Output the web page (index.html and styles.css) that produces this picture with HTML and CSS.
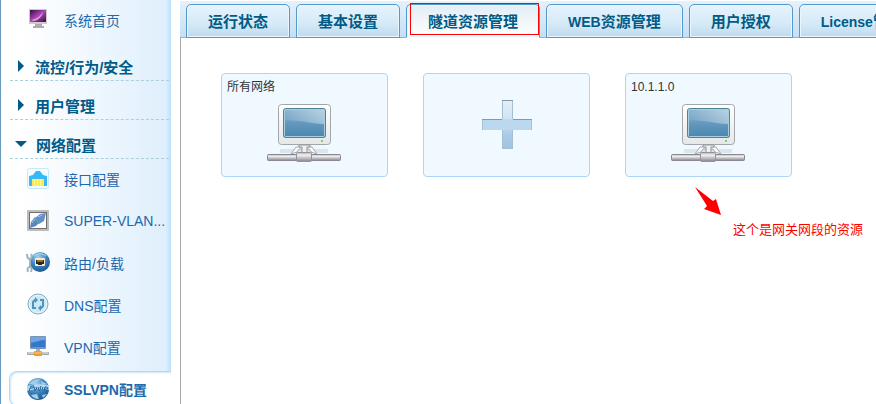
FILE: index.html
```html
<!DOCTYPE html>
<html lang="zh-CN">
<head>
  <meta charset="UTF-8" />
  <title>SSLVPN配置</title>
  <meta name="viewport" content="width=device-width, initial-scale=1" />
  <link rel="stylesheet" href="styles.css">
</head>
<body>
  <svg width="0" height="0" class="defs" aria-hidden="true">
    <defs>
      <linearGradient id="screen" x1="0" y1="0" x2="0" y2="1">
        <stop offset="0" stop-color="#a3c4d9" />
        <stop offset="0.5" stop-color="#6598bd" />
        <stop offset="1" stop-color="#4a86b0" />
      </linearGradient>
      <linearGradient id="shine" x1="0" y1="0" x2="1" y2="0">
        <stop offset="0" stop-color="#7eaac8" />
        <stop offset="1" stop-color="#c9deeb" />
      </linearGradient>
      <linearGradient id="pipe" x1="0" y1="0" x2="0" y2="1">
        <stop offset="0" stop-color="#b5b5b9" />
        <stop offset="0.3" stop-color="#f1f1f4" />
        <stop offset="1" stop-color="#85858b" />
      </linearGradient>
      <linearGradient id="frame" x1="0" y1="0" x2="0" y2="1">
        <stop offset="0" stop-color="#ffffff" />
        <stop offset="1" stop-color="#e6e7e9" />
      </linearGradient>
      <linearGradient id="purple" x1="0" y1="0" x2="1" y2="1">
        <stop offset="0" stop-color="#3b0a4c" />
        <stop offset="0.5" stop-color="#a949b0" />
        <stop offset="1" stop-color="#3b0a4c" />
      </linearGradient>
      <radialGradient id="globe" cx="0.4" cy="0.25" r="0.8">
        <stop offset="0" stop-color="#a5d3ee" />
        <stop offset="0.5" stop-color="#3f88c0" />
        <stop offset="1" stop-color="#17528f" />
      </radialGradient>
      <linearGradient id="plus-v" x1="0" y1="0" x2="0" y2="1">
        <stop offset="0" stop-color="#e4f0f9" />
        <stop offset="0.4" stop-color="#cfe2f4" />
        <stop offset="0.7" stop-color="#abcbe6" />
        <stop offset="1" stop-color="#a0c2e0" />
      </linearGradient>
      <symbol id="network-pc" viewBox="0 0 76 60">
        <path d="M14 46h48v4H14z" fill="#dbe6ec" />
        <path d="M25 51l5-7h16l5 7-6-2-2-3H33l-2 3z" fill="#f7f8f9" stroke="#a7acb1" />
        <rect x="12.500" y="1.500" width="52" height="40" rx="3" fill="url(#frame)" stroke="#a3a7ab" />
        <rect x="17.500" y="5.500" width="42" height="29" rx="2" fill="url(#screen)" stroke="#4e8397" />
        <path d="M19 7h39v14C46 21 36 17 19 17z" fill="url(#shine)" opacity="0.6" />
        <rect x="18.500" y="6.500" width="40" height="27" rx="1" fill="none" stroke="#a9cede" />
        <path d="M55 38h2" stroke="#83cf61" stroke-width="2" />
        <path d="M33 42h11v2h-3v7h-5v-7h-3z" fill="#eff0f1" stroke="#93979b" />
        <rect x="1.500" y="51.500" width="73" height="6" rx="1" fill="url(#pipe)" stroke="#88888e" />
        <rect x="30.500" y="49.500" width="15" height="9" rx="1" fill="url(#pipe)" stroke="#929298" />
      </symbol>
    </defs>
  </svg>

  <div class="layout">
    <nav class="sidebar">
      <a class="item" href="#">
        <svg class="icon" viewBox="0 0 24 24">
          <path d="M9 16h7v2H9zM7 18h11v2H7z" fill="#b2aaa8" />
          <rect x="3" y="1" width="18" height="15" fill="#cfcbc8" />
          <rect x="4" y="2" width="16" height="12" fill="url(#purple)" />
          <path d="M5 12c6-1 9-4 12-8-1 5-5 8-9 9z" fill="#e49be2" />
        </svg>
        系统首页
      </a>
      <a class="group" href="#"><span class="arrow"></span>流控/行为/安全</a>
      <a class="group" href="#"><span class="arrow"></span>用户管理</a>
      <a class="group open" href="#"><span class="arrow"></span>网络配置</a>
      <a class="item" href="#">
        <svg class="icon" viewBox="0 0 24 24">
          <rect x="1.500" y="1.500" width="21" height="20" rx="2" fill="#f3fcff" stroke="#c5e9f8" />
          <path d="M3 19V9l4-1 3-4h4l3 4 4 1v10z" fill="#38b9f6" />
          <rect x="6" y="12" width="12" height="7" fill="#ffe94b" />
          <path d="M8.500 12v7M11.500 12v7M14.500 12v7" stroke="#fff6a4" />
        </svg>
        接口配置
      </a>
      <a class="item" href="#">
        <svg class="icon" viewBox="0 0 24 24">
          <rect x="1" y="1" width="22" height="21" rx="1" fill="#bdbdbd" />
          <rect x="3.500" y="3.500" width="17" height="16" fill="#fff" stroke="#6e6e6e" />
          <path d="M4 19l1-6 4-5 5 5-4 4z" fill="#5886c4" />
          <path d="M20 4l-2 8-5 3-4-6 5-4z" fill="#638fd0" />
          <path d="M9 9l4 6" stroke="#5bbf67" />
          <path d="M6 14l3-4M12 8l4-2" stroke="#a4c6ec" />
        </svg>
        SUPER-VLAN...
      </a>
      <a class="item" href="#">
        <svg class="icon" viewBox="0 0 24 24">
          <circle cx="14" cy="11" r="10" fill="url(#globe)" />
          <path d="M8 5c4-3 8-3 12 0" fill="none" stroke="#b4daf3" />
          <rect x="9" y="7" width="10" height="8" rx="1" fill="#f4ead5" />
          <path d="M10 13V9h8v4h-2v1h-4v-1z" fill="#30241a" />
          <path d="M12 9v2M14 9v2M16 9v2" stroke="#f2b943" />
          <path d="M1 3c0 4 1 5 3 5 2-1 2-3 1-5M4 8v8M2 21c-1-4 0-5 2-5s2 2 1 5" fill="none" stroke="#9eb5c6" stroke-width="2" />
        </svg>
        路由/负载
      </a>
      <a class="item" href="#">
        <svg class="icon" viewBox="0 0 24 24">
          <circle cx="12" cy="11" r="10" fill="#e0f3fa" stroke="#7fabc1" />
          <circle cx="12" cy="11" r="8" fill="#c9e9f5" />
          <path d="M10 15H7V9l2-2h2M14 7h3v6l-2 2h-2" fill="none" stroke="#5390bb" stroke-width="2" />
          <path d="M9 4l3 3-3 3zM15 12l-3 3 3 3z" fill="#5390bb" />
        </svg>
        DNS配置
      </a>
      <a class="item" href="#">
        <svg class="icon" viewBox="0 0 24 24">
          <rect x="4" y="1" width="16" height="13" rx="1" fill="#7894b0" />
          <rect x="5" y="2" width="14" height="10" fill="#3478cb" />
          <path d="M5 2h14v3C14 5 10 7 5 8z" fill="#6da8e5" />
          <path d="M10 14h4v3h-4z" fill="#a5b1bb" />
          <rect x="1" y="17" width="22" height="3" rx="1" fill="#a2a7aa" />
          <path d="M2 18h20" stroke="#edf0f2" />
          <rect x="8" y="16" width="8" height="5" rx="1" fill="#ee9b2c" />
          <path d="M9 18h6" stroke="#ffd18a" />
        </svg>
        VPN配置
      </a>
      <a class="item active" href="#">
        <svg class="icon" viewBox="0 0 24 24">
          <circle cx="12" cy="12" r="11" fill="url(#globe)" />
          <path d="M3 7c4-5 9-4 11-5-1 3-5 2-6 5zM15 4l6 3-5 1zM5 18l6-1 2 5c-3 0-6-1-8-4zM16 18l5-1-4 4z" fill="#a5cde6" />
          <path d="M1 9c7-2 15-2 22-1v5c-7-1-15-1-22 1z" fill="#b5d7ec" />
          <path d="M3 14l2-5h3l-1 2H4M9 10l-1 3h2l1-3M13 10l-1 3M15 9l-1 4-1 1M17 10l-1 3M19 12h3l-1-2h-2l-1 3h2" fill="none" stroke="#24659e" />
        </svg>
        SSLVPN配置
      </a>
    </nav>

    <main class="main">
      <div class="tabs">
        <button class="tab">运行状态</button>
        <button class="tab">基本设置</button>
        <button class="tab active">隧道资源管理</button>
        <button class="tab"><span class="latin">WEB</span>资源管理</button>
        <button class="tab">用户授权</button>
        <button class="tab"><span class="latin">License</span>管理</button>
      </div>
      <div class="content">
        <button class="card">
          <span class="name">所有网络</span>
          <svg class="pc"><use href="#network-pc" /></svg>
        </button>
        <button class="card add" aria-label="add">
          <svg class="plus" viewBox="0 0 50 50">
            <rect x="20" y="0" width="11" height="49" fill="url(#plus-v)" />
            <path d="M20.500 1v48M30.500 1v48" stroke="#a5bfd3" />
            <rect x="0" y="19" width="50" height="11" fill="#bcd8ee" />
            <path d="M0 19.500h20M31 19.500h19M20 0.500h11" stroke="#8498a8" />
            <path d="M0.500 20v10M49.500 20v10" stroke="#a5bfd3" />
          </svg>
        </button>
        <div class="cell">
          <button class="card">
            <span class="name">10.1.1.0</span>
            <svg class="pc"><use href="#network-pc" /></svg>
          </button>
          <div class="note">
            <svg class="pointer" viewBox="0 0 27 29">
              <path d="M0 0l18 14 3-2 5 16-17-6 3-3z" fill="#f00" />
            </svg>
            <span class="note-text">这个是网关网段的资源</span>
          </div>
        </div>
      </div>
    </main>
  </div>
</body>
</html>
```

FILE: styles.css
```css
:root {
  --link: #1c69ae;
  --heading: #005b87;
  --tab-border: #5299cc;
  --card-border: #abd6f9;
}
* { box-sizing: border-box; }
body {
  margin: 0;
  font-family: "Liberation Sans", "Noto Sans CJK SC", sans-serif;
  font-size: 14px;
  background: #fff;
}
a { text-decoration: none; }
button {
  font-family: inherit;
  cursor: pointer;
}
.defs { position: absolute; }
.layout {
  display: flex;
  height: 100vh;
  overflow: hidden;
}

/* sidebar */
.sidebar {
  flex: none;
  width: 171px;
  margin-right: 9px;
  border-left: 1px solid #6699bd;
  background: linear-gradient(to right, transparent 97%, #bddffb), linear-gradient(to right, #fff 12%, #edf6fe 60%, #deeefb);
}
.item {
  display: flex;
  align-items: center;
  gap: 14px;
  height: 42px;
  padding: 0 0 2px 25px;
  color: var(--link);
  white-space: nowrap;
}
.icon {
  flex: none;
  width: 24px;
  height: 24px;
}
.item.active {
  height: 35px;
  margin: 2px 0 0 8px;
  padding: 0 0 0 16px;
  border: 1px solid #b0d8f4;
  border-right: none;
  border-radius: 8px 0 0 8px;
  box-shadow: inset 1px 1px 2px #cce7fa;
  background: #fff;
  font-weight: bold;
}
.group {
  display: flex;
  align-items: center;
  gap: 11px;
  height: 39px;
  margin: 0 2px 0 9px;
  padding: 10px 0 0 8px;
  border-bottom: 1px dashed #abcfdb;
  color: var(--heading);
  font-size: 15px;
  font-weight: bold;
}
.arrow {
  width: 6px;
  border: 6px solid transparent;
  border-left-color: var(--heading);
  border-right: none;
}
.open { padding-left: 5px; gap: 9px; }
.open .arrow {
  width: 12px;
  border: 6px solid transparent;
  border-top-color: var(--heading);
  border-bottom: none;
}

/* tabs */
.main {
  flex: 1;
  min-width: 0;
  display: flex;
  flex-direction: column;
}
.tabs {
  display: flex;
  gap: 6px;
  height: 38px;
  padding: 3px 0 0 6px;
  overflow: hidden;
  border-top: 1px solid #fff;
  background: linear-gradient(#e6f1fa, #c5def4);
  box-shadow: inset 0 -1px #8bb5d6;
}
.tab {
  flex: none;
  padding: 0 21px 2px;
  border: 1px solid var(--tab-border);
  border-radius: 5px 5px 0 0;
  background: linear-gradient(#e6f4fe, #d5e9f7 60%, #bfdaed);
  box-shadow: inset 0 0 0 1px #eaf6ff;
  color: var(--heading);
  font-size: 15px;
  font-weight: bold;
  white-space: nowrap;
}
.latin { font-size: 14px; }
.tab.active {
  position: relative;
  border-bottom-color: #fff;
  background: linear-gradient(#e3edf5, #fff);
}
.tab.active::after {
  content: "";
  position: absolute;
  inset: -2px 0 2px 3px;
  border: 1px solid #f00;
}

/* resources */
.content {
  flex: 1;
  display: flex;
  flex-wrap: wrap;
  align-content: flex-start;
  gap: 35px;
  padding: 35px 40px;
  border-left: 1px solid #a6a6a6;
}
.card {
  display: flex;
  flex-direction: column;
  align-items: center;
  width: 167px;
  height: 104px;
  padding: 4px 7px 4px 5px;
  border: 1px solid var(--card-border);
  border-radius: 4px;
  background: #f0f9ff;
  color: #333;
  font-size: 12px;
}
.card.add {
  justify-content: center;
  padding: 0;
}
.name {
  align-self: flex-start;
  line-height: 18px;
}
.pc {
  width: 76px;
  height: 60px;
  margin-top: 7px;
}
.plus {
  width: 50px;
  height: 50px;
}
.cell { position: relative; }
.note {
  position: absolute;
  top: 114px;
  left: 70px;
  display: flex;
  align-items: flex-end;
  gap: 11px;
  color: #f00;
  font-size: 13px;
  white-space: nowrap;
}
.pointer {
  width: 27px;
  height: 29px;
  margin-bottom: 24px;
}
.note-text { line-height: 20px; }
```
